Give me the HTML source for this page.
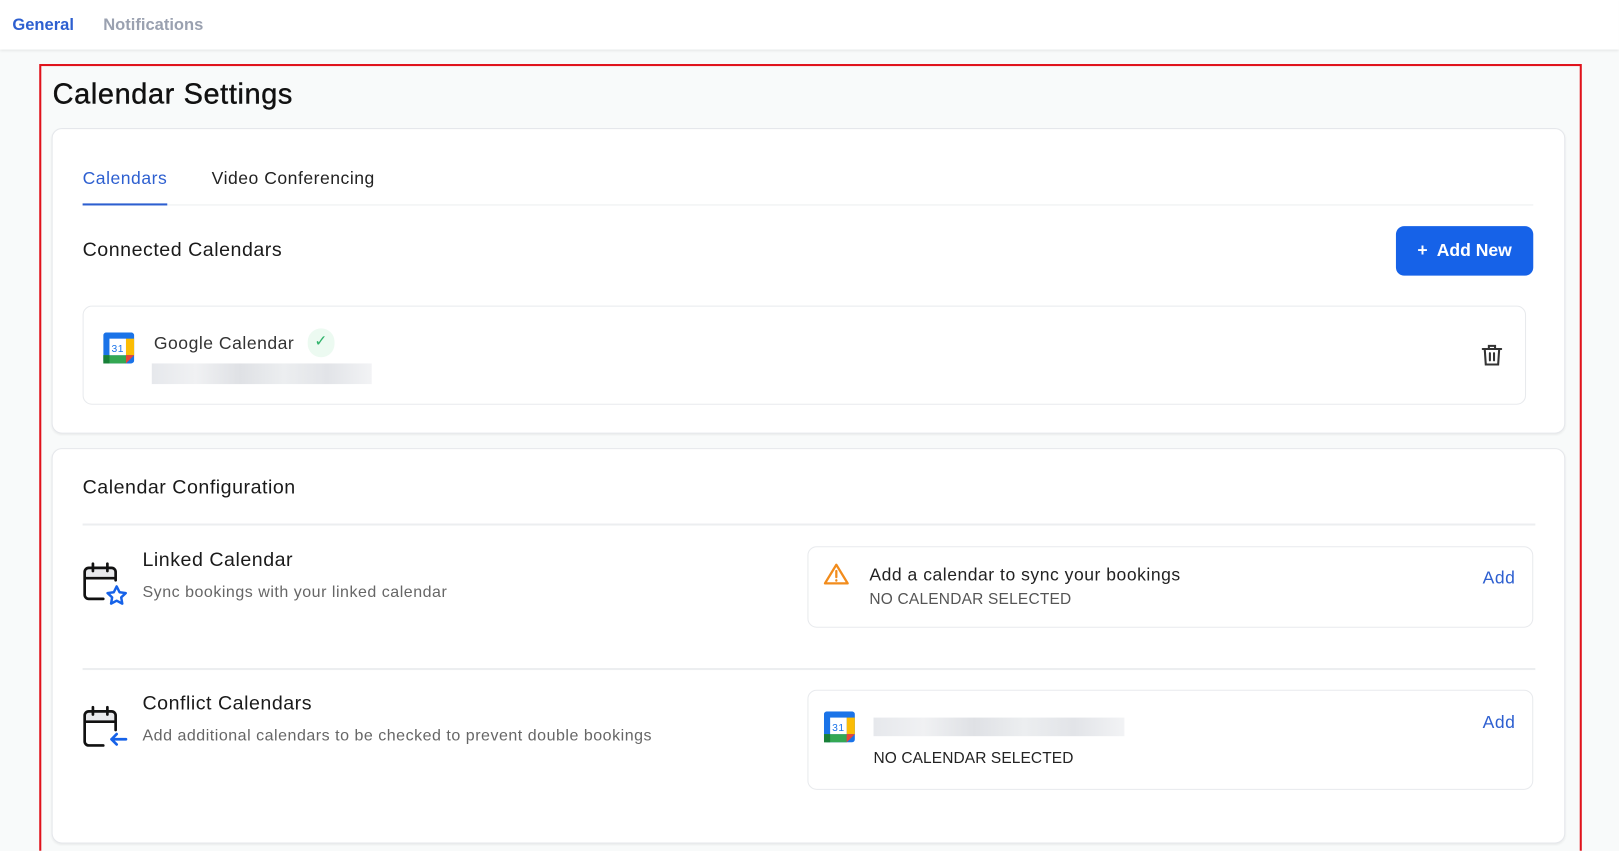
<!DOCTYPE html>
<html><head><style>
*{box-sizing:border-box;margin:0;padding:0}
html,body{width:1619px;height:851px;overflow:hidden;background:#f8fafa;font-family:"Liberation Sans",sans-serif}
#w{position:relative;width:1619px;height:851px;overflow:hidden}
#s{position:absolute;left:0;top:0;width:1568px;height:824px;overflow:hidden;transform:scale(1.0325);transform-origin:0 0;letter-spacing:.5px}
.a{position:absolute}
.top{left:0;top:0;width:1568px;height:48px;background:#fff;box-shadow:0 1px 3px rgba(0,0,0,.12)}
.card{background:#fff;border:1px solid #e5e7eb;border-radius:10px;box-shadow:0 1px 2px rgba(0,0,0,.06)}
.box{border:1px solid #e8eaed;border-radius:9px;background:#fff}
.blur{background:linear-gradient(90deg,#e6e8ec,#f0f1f3 20%,#dfe1e5 40%,#eceef0 60%,#e2e4e8 80%,#f2f3f5)}
</style></head><body><div id="w"><div id="s">
<div class="a top"></div>
<div class="a" style="left:12px;top:16px;font-size:16px;font-weight:bold;color:#2d5fd0;letter-spacing:0">General</div>
<div class="a" style="left:100px;top:16px;font-size:16px;font-weight:bold;color:#9aa1b0;letter-spacing:0">Notifications</div>
<div class="a" style="left:38px;top:62px;width:1494px;height:775px;border:2.5px solid #e0121b"></div>
<div class="a" style="left:51px;top:75px;font-size:28px;color:#111;letter-spacing:.6px;-webkit-text-stroke:.4px #111">Calendar Settings</div>

<div class="a card" style="left:50px;top:124px;width:1466px;height:296px"></div>
<div class="a" style="left:80px;top:163px;font-size:17px;color:#2d5fd0">Calendars</div>
<div class="a" style="left:205px;top:163px;font-size:17px;color:#222">Video Conferencing</div>
<div class="a" style="left:80px;top:198px;width:1405px;height:1px;background:#eceef0"></div>
<div class="a" style="left:80px;top:197px;width:82px;height:2px;background:#2d5fd0"></div>
<div class="a" style="left:80px;top:232px;font-size:19px;color:#1a1a1a">Connected Calendars</div>
<div class="a" style="left:1352px;top:219px;width:133px;height:48px;background:#1662e8;border-radius:8px;color:#fff;font-size:17px;font-weight:bold;line-height:48px;text-align:center;letter-spacing:0">+&nbsp; Add New</div>
<div class="a box" style="left:80px;top:296px;width:1398px;height:96px"></div>
<svg class="a" style="left:100px;top:322px" width="30" height="30" viewBox="0 0 30 30"><rect x="0" y="0" width="30" height="30" rx="3" fill="#1a73e8"/><rect x="0" y="22" width="22" height="8" fill="#34a853"/><rect x="22" y="6" width="8" height="16" fill="#fbbc04"/><path d="M22 22h8l-8 8z" fill="#ea4335"/><rect x="0" y="22" width="6" height="8" fill="#188038"/><rect x="6" y="6" width="16" height="16" fill="#fff"/><text x="14" y="19" font-size="10" text-anchor="middle" fill="#1a73e8" font-family="Liberation Sans">31</text></svg>
<div class="a" style="left:149px;top:323px;font-size:17px;color:#333">Google Calendar</div>
<div class="a" style="left:298px;top:318px;width:26px;height:28px;border-radius:13px;background:#ecfaf1;color:#2fb36a;font-size:15px;text-align:center;line-height:26px">✓</div>
<div class="a blur" style="left:147px;top:352px;width:213px;height:20px"></div>
<svg class="a" style="left:1435px;top:333px" width="20" height="22" viewBox="0 0 20 22" fill="none" stroke="#333" stroke-width="2" stroke-linecap="round"><path d="M1 5h18M7 5V2h6v3M3 5l1 15h12l1-15M8 9v7M12 9v7"/></svg>

<div class="a card" style="left:50px;top:434px;width:1466px;height:383px"></div>
<div class="a" style="left:80px;top:462px;font-size:19px;color:#1a1a1a">Calendar Configuration</div>
<div class="a" style="left:80px;top:507px;width:1407px;height:2px;background:#eceef0"></div>
<svg class="a" style="left:78px;top:544px" width="46" height="42" viewBox="0 0 46 42" fill="none" stroke-width="2.6" stroke-linecap="round" stroke-linejoin="round"><rect x="4" y="6" width="30" height="10" fill="#e8e9ec" stroke="none"/><path d="M12 2v7M26 2v7M22 36H8a4 4 0 0 1-4-4V10a4 4 0 0 1 4-4h22a4 4 0 0 1 4 4v8M4 16h30" stroke="#111"/><path d="M35 24l2.8 5.6 6 .8-4.4 4.2 1 6-5.4-2.8-5.4 2.8 1-6-4.4-4.2 6-.8z" stroke="#1662e8" stroke-width="2.4"/></svg>
<div class="a" style="left:138px;top:532px;font-size:19px;color:#1a1a1a">Linked Calendar</div>
<div class="a" style="left:138px;top:565px;font-size:15.5px;color:#666">Sync bookings with your linked calendar</div>
<div class="a box" style="left:782px;top:529px;width:703px;height:79px"></div>
<svg class="a" style="left:797px;top:545px" width="26" height="22" viewBox="0 0 26 22" fill="none" stroke="#f28c1c" stroke-width="2.2" stroke-linejoin="round" stroke-linecap="round"><path d="M13 2L2 20h22z"/><path d="M13 8v6M13 17v.3"/></svg>
<div class="a" style="left:842px;top:547px;font-size:17px;color:#222">Add a calendar to sync your bookings</div>
<div class="a" style="left:842px;top:572px;font-size:15px;color:#555;letter-spacing:.2px">NO CALENDAR SELECTED</div>
<div class="a" style="left:1436px;top:550px;font-size:17px;color:#2d5fd0">Add</div>

<div class="a" style="left:80px;top:647px;width:1407px;height:2px;background:#eceef0"></div>
<svg class="a" style="left:78px;top:683px" width="46" height="42" viewBox="0 0 46 42" fill="none" stroke-width="2.6" stroke-linecap="round" stroke-linejoin="round"><rect x="4" y="6" width="30" height="10" fill="#e8e9ec" stroke="none"/><path d="M12 2v7M26 2v7M22 39H8a4 4 0 0 1-4-4V10a4 4 0 0 1 4-4h22a4 4 0 0 1 4 4v14M4 16h30" stroke="#111"/><path d="M44 33H30M35 28l-5 5 5 5" stroke="#1662e8"/></svg>
<div class="a" style="left:138px;top:671px;font-size:19px;color:#1a1a1a">Conflict Calendars</div>
<div class="a" style="left:138px;top:704px;font-size:15.5px;color:#666">Add additional calendars to be checked to prevent double bookings</div>
<div class="a box" style="left:782px;top:668px;width:703px;height:97px"></div>
<svg class="a" style="left:798px;top:689px" width="30" height="30" viewBox="0 0 30 30"><rect x="0" y="0" width="30" height="30" rx="3" fill="#1a73e8"/><rect x="0" y="22" width="22" height="8" fill="#34a853"/><rect x="22" y="6" width="8" height="16" fill="#fbbc04"/><path d="M22 22h8l-8 8z" fill="#ea4335"/><rect x="0" y="22" width="6" height="8" fill="#188038"/><rect x="6" y="6" width="16" height="16" fill="#fff"/><text x="14" y="19" font-size="10" text-anchor="middle" fill="#1a73e8" font-family="Liberation Sans">31</text></svg>
<div class="a blur" style="left:846px;top:695px;width:243px;height:18px"></div>
<div class="a" style="left:846px;top:726px;font-size:15px;color:#222;letter-spacing:.1px">NO CALENDAR SELECTED</div>
<div class="a" style="left:1436px;top:690px;font-size:17px;color:#2d5fd0">Add</div>
</div></div></body></html>
